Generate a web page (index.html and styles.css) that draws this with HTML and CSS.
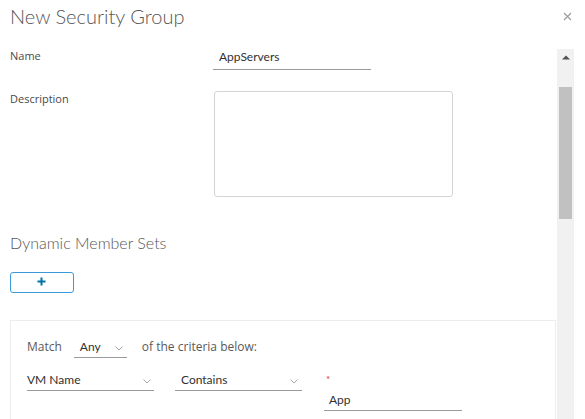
FILE: index.html
```html
<!DOCTYPE html>
<html>
<head>
<meta charset="utf-8">
<link rel="stylesheet" href="styles.css">
</head>
<body>
<div class="dialog">
  <header class="hdr">
    <h1 class="title">New Security Group</h1>
    <span class="close"><svg width="9" height="9" viewBox="0 0 9 9"><path d="M1 1L8 8M8 1L1 8" stroke="#9a9a9a" stroke-width="1.1" fill="none"/></svg></span>
  </header>
  <div class="body">
    <div class="content">
      <div class="form-row">
        <div class="label">Name</div>
        <div class="text-input">AppServers</div>
      </div>
      <div class="form-row row-desc">
        <div class="label">Description</div>
        <div class="textarea"></div>
      </div>
      <h2 class="section">Dynamic Member Sets</h2>
      <div class="add-btn"><svg width="9" height="9" viewBox="0 0 9 9"><path d="M4.5 0.5V8.5M0.5 4.5H8.5" stroke="#0072a3" stroke-width="2" fill="none"/></svg></div>
      <div class="panel">
        <div class="match-row">
          <span class="plain">Match</span>
          <div class="select sel-any"><span>Any</span><svg class="chev" width="8" height="5" viewBox="0 0 8 5"><path d="M0.5 0.5L4 4L7.5 0.5" stroke="#a8a8a8" fill="none"/></svg></div>
          <span class="plain">of the criteria below:</span>
        </div>
        <div class="crit-row">
          <div class="select sel-vm"><span>VM Name</span><svg class="chev" width="8" height="5" viewBox="0 0 8 5"><path d="M0.5 0.5L4 4L7.5 0.5" stroke="#a8a8a8" fill="none"/></svg></div>
          <div class="select sel-op"><span>Contains</span><svg class="chev" width="8" height="5" viewBox="0 0 8 5"><path d="M0.5 0.5L4 4L7.5 0.5" stroke="#a8a8a8" fill="none"/></svg></div>
          <div class="value-col">
            <span class="req">*</span>
            <div class="text-input val-input">App</div>
          </div>
        </div>
      </div>
    </div>
    <div class="scrollbar">
      <div class="sb-btn"><svg width="8" height="5" viewBox="0 0 8 5"><path d="M0 4.5L4 0.5L8 4.5Z" fill="#505050"/></svg></div>
      <div class="sb-thumb"></div>
    </div>
  </div>
</div>
</body>
</html>
```
FILE: styles.css
```css
html, body {
  margin: 0;
  padding: 0;
  background: #fff;
}
body {
  font-family: Lato, "Open Sans", sans-serif;
  color: #333;
  width: 585px;
  height: 419px;
  overflow: hidden;
}
.dialog {
  display: flex;
  flex-direction: column;
  height: 419px;
}
.hdr {
  height: 49px;
  display: flex;
  align-items: flex-start;
  justify-content: space-between;
  flex: none;
}
.title {
  margin: 3px 0 0 10px;
  font-size: 20px;
  line-height: 26px;
  font-weight: 300;
  color: #565656;
}
.close {
  display: block;
  margin: 12px 13px 0 0;
  line-height: 0;
}
.body {
  display: flex;
  flex: 1;
  min-height: 0;
}
.content {
  width: 546px;
  padding: 0 1px 0 10px;
  flex: none;
}
.form-row {
  display: grid;
  grid-template-columns: 203px auto;
  align-items: start;
}
.label {
  font-family: "Open Sans", sans-serif;
  font-size: 11px;
  line-height: 14px;
  color: #4a4a4a;
}
.text-input {
  box-sizing: border-box;
  width: 158px;
  height: 21px;
  padding: 1px 0 0 6px;
  font-size: 12px;
  line-height: 14px;
  color: #313131;
  border-bottom: 1px solid #9a9a9a;
}
.row-desc {
  margin-top: 21px;
}
.row-desc .label {
  margin-top: 1px;
}
.textarea {
  box-sizing: border-box;
  width: 239px;
  height: 106px;
  margin-left: 1px;
  border: 1px solid #d4d4d4;
  border-radius: 3px;
}
.section {
  margin: 36px 0 0;
  font-size: 16px;
  line-height: 20px;
  font-weight: 300;
  color: #565656;
}
.add-btn {
  box-sizing: border-box;
  width: 64px;
  height: 21px;
  margin-top: 19px;
  border: 1px solid #3a9ad9;
  border-radius: 3px;
  display: flex;
  align-items: center;
  justify-content: center;
}
.add-btn svg {
  margin-left: -1px;
  margin-top: -2px;
}
.panel {
  margin-top: 27px;
  border: 1px solid #ededed;
  border-bottom: none;
  padding: 18px 16px 20px;
  height: 120px;
}
.match-row {
  display: flex;
  align-items: flex-start;
}
.plain {
  font-family: "Open Sans", sans-serif;
  font-size: 12px;
  line-height: 14px;
  margin-top: 1px;
  color: #5a5a5a;
}
.select {
  box-sizing: border-box;
  height: 19px;
  display: flex;
  align-items: flex-start;
  justify-content: space-between;
  padding: 1px 4px 0 6px;
  font-size: 12px;
  line-height: 14px;
  color: #313131;
  border-bottom: 1px solid #9a9a9a;
}
.chev {
  margin-top: 6px;
}
.sel-any {
  width: 53px;
  margin: 0 15px 0 12px;
}
.crit-row {
  display: flex;
  align-items: flex-start;
  margin-top: 14px;
}
.sel-vm {
  width: 127px;
  padding-left: 0;
  padding-right: 3px;
}
.sel-op {
  width: 127px;
  margin-left: 21px;
  padding-right: 4px;
}
.value-col {
  margin-left: 22px;
  display: flex;
  flex-direction: column;
}
.req {
  color: #e02d2d;
  font-size: 10px;
  line-height: 10px;
  height: 20px;
  padding-left: 2px;
  padding-top: 2px;
  box-sizing: border-box;
}
.val-input {
  width: 138px;
  height: 19px;
  padding-left: 5px;
}
.scrollbar {
  width: 17px;
  flex: none;
  background: #f1f1f1;
  display: flex;
  flex-direction: column;
  align-items: center;
}
.sb-btn {
  height: 17px;
  width: 17px;
  display: flex;
  align-items: center;
  justify-content: center;
}
.sb-thumb {
  margin-top: 21px;
  width: 13px;
  height: 132px;
  background: #c1c1c1;
}
```
